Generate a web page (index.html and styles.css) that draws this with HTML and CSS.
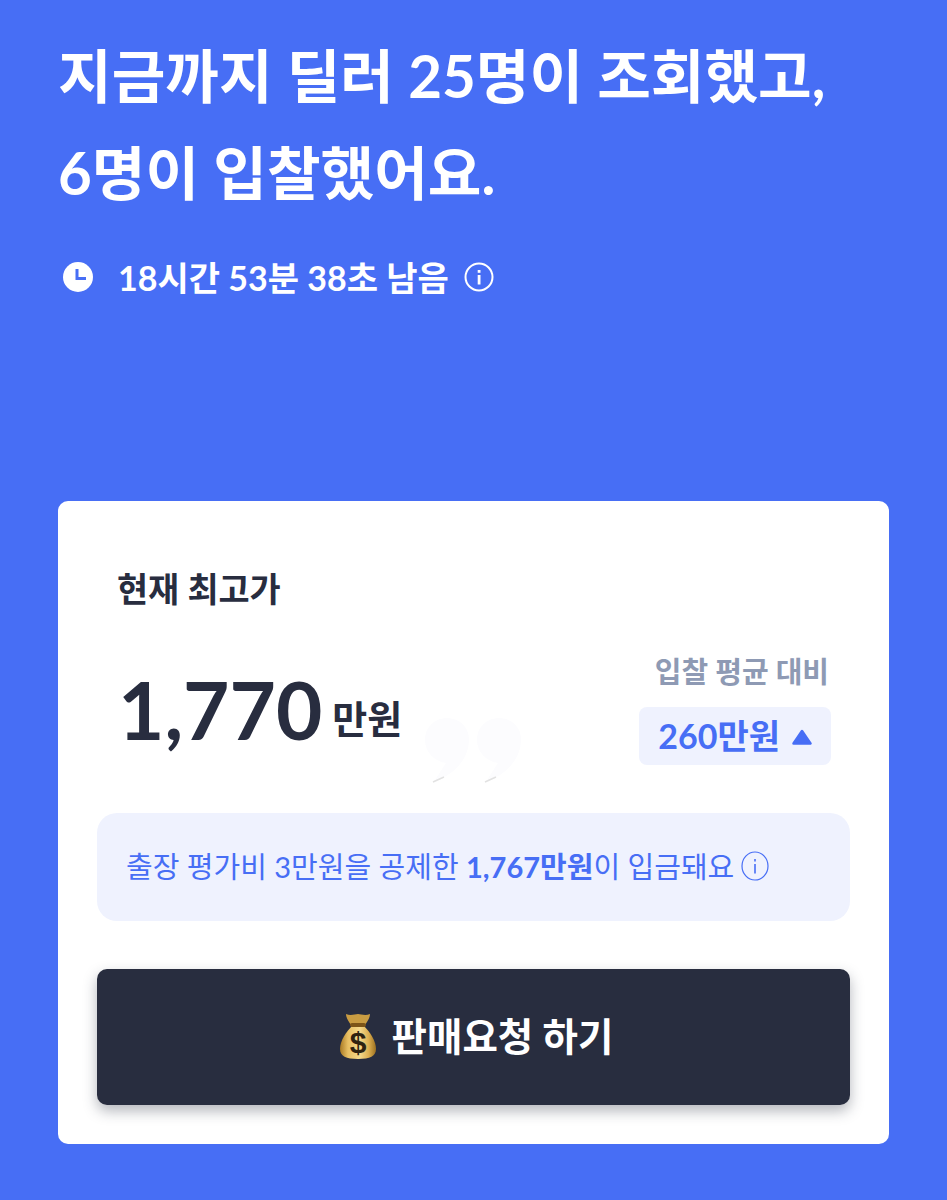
FILE: index.html
```html
<!DOCTYPE html>
<html lang="ko">
<head>
<meta charset="utf-8">
<title>판매요청</title>
<link rel="stylesheet" href="styles.css">
</head>
<body>
<main class="page">
  <h1 class="headline">지금까지 딜러 25명이 조회했고,<br>6명이 입찰했어요.</h1>
  <div class="timer">
    <svg class="clock" viewBox="0 0 30 30"><circle cx="15" cy="15" r="15" fill="#fff"/><path d="M14 7v9.500h9" fill="none" stroke="#476ef5" stroke-width="3"/></svg>
    <span>18시간 53분 38초 남음</span>
    <svg class="info-white" viewBox="0 0 30 30"><circle cx="15" cy="15" r="13.500" fill="none" stroke="#fff" stroke-width="2"/><rect x="13.700" y="13" width="2.800" height="9.500" fill="#fff"/><rect x="13.700" y="8" width="2.800" height="2.800" fill="#fff"/></svg>
  </div>
  <section class="card">
    <svg class="quote-mark" viewBox="0 0 98 66"><path d="M23 1C35 1 45 10 45 22 45 42 30 58 11 64L9 66 22 46C9 44 1 34 1 23 1 10 11 1 23 1ZM75 1C87 1 97 10 97 22 97 42 82 58 63 64L61 66 74 46C61 44 53 34 53 23 53 10 63 1 75 1Z" fill="#fcfcfe"/><path d="M9 65 20 60M61 65 72 60" stroke="#e2e2e2" stroke-width="1.500"/></svg>
    <div class="label">현재 최고가</div>
    <div class="price-row">
      <div class="price"><span class="amount">1,770</span><span class="unit">만원</span></div>
      <div class="compare">
        <div class="compare-label">입찰 평균 대비</div>
        <div class="badge">260만원<svg class="tri" viewBox="0 0 20 16"><path d="M10 2 18.500 14.500H1.500Z" fill="#476ef5" stroke="#476ef5" stroke-linejoin="round" stroke-width="2.500"/></svg></div>
      </div>
    </div>
    <div class="notice">
      <span class="notice-text">출장 평가비 3만원을 공제한 <b>1,767만원</b>이 입금돼요</span>
      <svg class="info-blue" viewBox="0 0 30 30"><ellipse cx="15" cy="15" rx="13" ry="14" fill="none" stroke="#476ef5" stroke-width="1.200"/><rect x="14.200" y="13" width="1.600" height="9.500" fill="#476ef5"/><rect x="14.200" y="8" width="1.600" height="2.500" fill="#476ef5"/></svg>
    </div>
    <button class="cta">
      <svg class="bag" viewBox="0 0 36 46">
        <defs>
          <linearGradient id="bagFill" x1="0" y1="0" x2="1" y2="0"><stop offset="0" stop-color="#a97a24"/><stop offset="0.22" stop-color="#e8bf62"/><stop offset="0.55" stop-color="#f5d98c"/><stop offset="0.8" stop-color="#dcae4f"/><stop offset="1" stop-color="#9c7020"/></linearGradient>
        </defs>
        <path d="M6 1C11 3 15 1 18 1 21 1 25 3 30 1 30 5 27 9 25 12H11C9 9 6 5 6 1Z" fill="#c99c42"/>
        <path d="M12 13C6 19 0 28 0 36 0 43 6 46 18 46 30 46 36 43 36 36 36 28 30 19 24 13Z" fill="url(#bagFill)"/>
        <rect x="10" y="10" width="16" height="4" rx="2" fill="#7d5518"/>
        <text class="bag-sign" x="18" y="40" text-anchor="middle">$</text>
      </svg>
      판매요청 하기
    </button>
  </section>
</main>
</body>
</html>
```
FILE: styles.css
```css
* { box-sizing: border-box; }
html, body { margin: 0; }
body {
  background: #476ef5;
  font-family: Lato, "Noto Sans CJK KR", sans-serif;
  height: 1200px;
  overflow: hidden;
}
.page { padding: 27px 58px 0; }
.headline {
  margin: 0;
  color: #fff;
  font-size: 58.3px;
  font-weight: 700;
  line-height: 97px;
  white-space: nowrap;
}
.timer {
  display: flex;
  align-items: center;
  margin-top: 36px;
  margin-left: 5px;
  color: #fff;
  font-size: 34px;
  font-weight: 700;
  height: 40px;
}
.timer span { padding-bottom: 2px; }
.clock { width: 30px; height: 30px; margin-right: 25px; }
.info-white { width: 30px; height: 30px; margin-left: 15px; }
.card {
  position: relative;
  margin-top: 204px;
  width: 831px;
  height: 643px;
  background: #fff;
  border-radius: 10px;
  padding: 63px 39px 0;
}
.quote-mark {
  position: absolute;
  left: 366px;
  top: 216px;
  width: 98px;
  height: 66px;
}
.label {
  margin-left: 20px;
  color: #282d3f;
  font-size: 33.8px;
  font-weight: 700;
  line-height: 50px;
}
.price-row {
  position: relative;
  display: flex;
  justify-content: space-between;
  margin-top: 45px;
  height: 130px;
}
.price { display: flex; align-items: center; margin-left: 21px; height: 100px; }
.amount { color: #282d3f; font-size: 80px; font-weight: 700; line-height: 100px; }
.unit { color: #282d3f; font-size: 38px; font-weight: 700; margin: 14px 0 0 10px; }
.compare { display: flex; flex-direction: column; align-items: flex-end; margin-right: 19px; }
.compare-label { color: #8e9ab4; font-size: 29px; font-weight: 700; line-height: 46px; margin-right: 2px; margin-top: -10px; }
.badge {
  display: flex;
  align-items: center;
  gap: 12px;
  height: 58px;
  margin-top: 12px;
  padding: 0 19px 4px;
  border-radius: 8px;
  background: #eff2fe;
  color: #476ef5;
  font-size: 34px;
  font-weight: 700;
}
.tri { width: 20px; height: 16px; margin-top: 5px; }
.notice {
  position: relative;
  display: flex;
  align-items: center;
  gap: 6px;
  height: 108px;
  margin-top: 24px;
  padding: 0 0 4px 29px;
  border-radius: 20px;
  background: #eff2fe;
  color: #476ef5;
  font-size: 29px;
  white-space: nowrap;
}
.notice-text b { font-weight: 700; }
.info-blue { width: 30px; height: 30px; margin-top: 2px; }
.cta {
  display: flex;
  align-items: center;
  justify-content: center;
  gap: 16px;
  width: 100%;
  height: 136px;
  margin-top: 48px;
  padding: 0 0 6px 6px;
  border: 0;
  border-radius: 10px;
  background: #282d3f;
  color: #fff;
  font-family: inherit;
  font-size: 38.5px;
  font-weight: 700;
  box-shadow: 0 6px 14px rgba(40, 45, 63, 0.35);
}
.bag { width: 36px; height: 46px; margin-top: 4px; }
.bag-sign { fill: #2e2210; font-size: 30px; font-family: "Liberation Sans", sans-serif; }
```
